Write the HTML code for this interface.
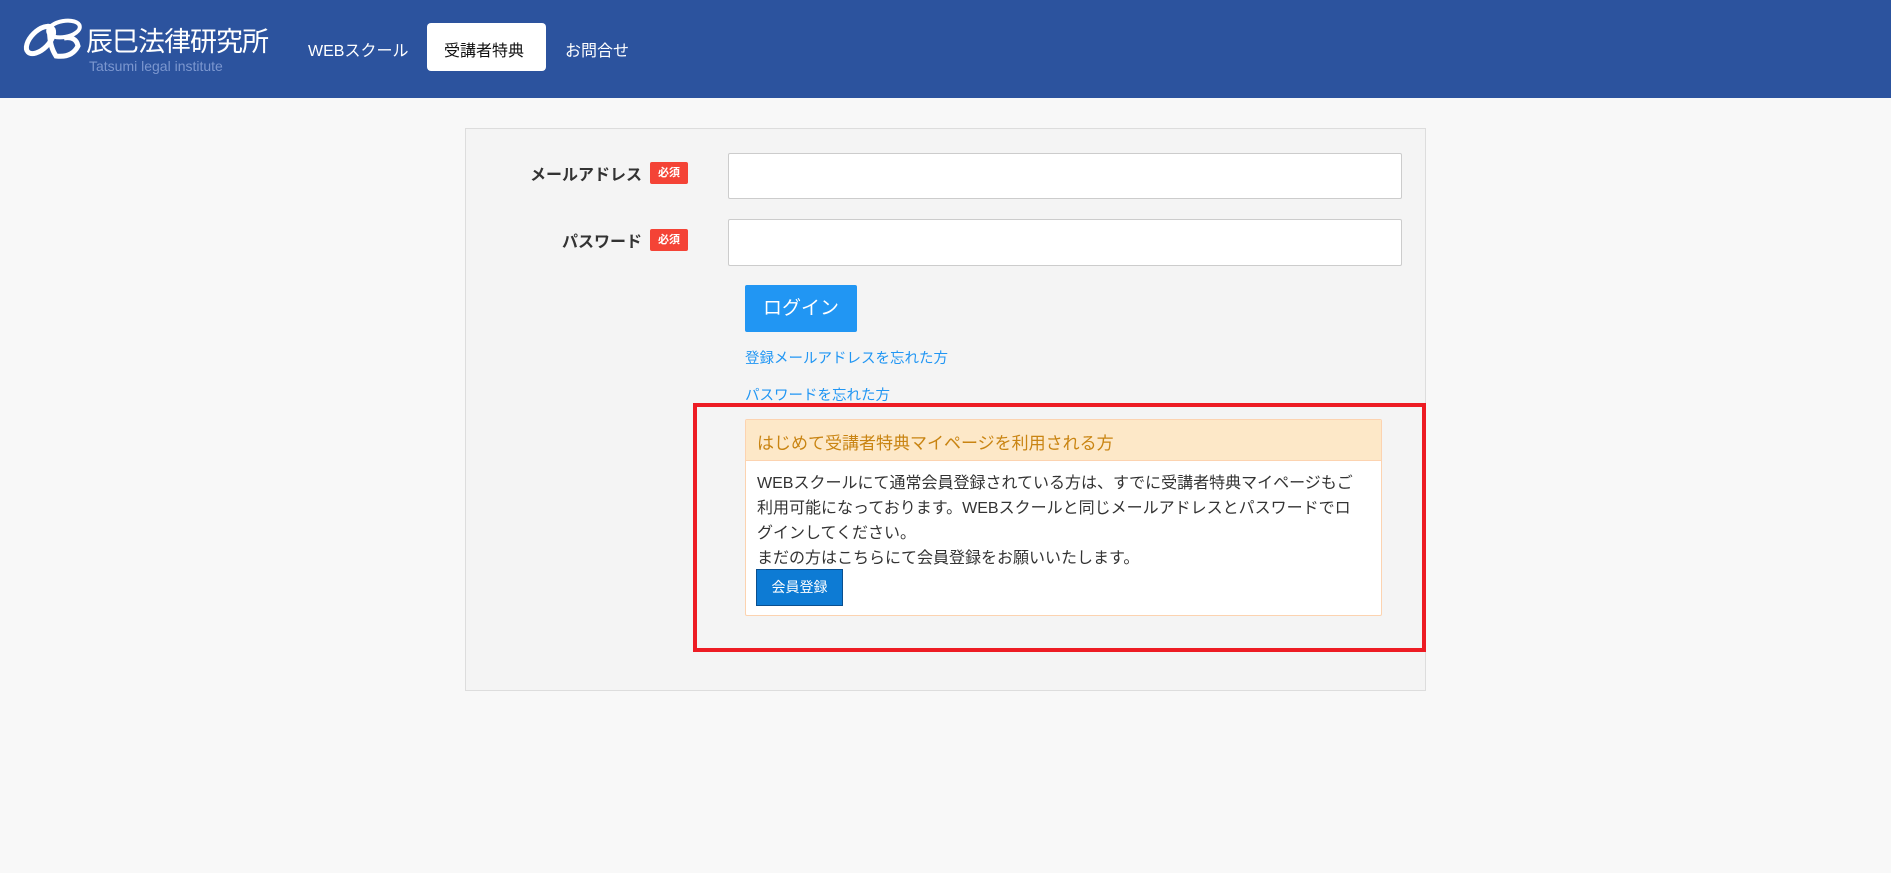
<!DOCTYPE html>
<html><head><meta charset="utf-8"><style>
*{margin:0;padding:0;box-sizing:border-box}
body{width:1891px;height:873px;background:#f8f8f8;font-family:"Liberation Sans","Noto Sans CJK JP",sans-serif;color:#333;position:relative;overflow:hidden}
.a{position:absolute;white-space:nowrap}
#hd{left:0;top:0;width:1891px;height:98px;background:#2c539e}
.nav{color:#fff;font-size:16px;top:37px}
.badge{background:#f44336;color:#fff;font-size:11px;font-weight:bold;width:38px;height:22px;line-height:22px;text-align:center;border-radius:2px}
.lbl{font-size:16px;font-weight:bold;color:#333}
.inp{background:#fff;border:1px solid #ccc;border-radius:2px}
.lnk{color:#2196f3;font-size:15px}
</style></head><body>
<div id="hd" class="a"></div>
<svg class="a" style="left:20px;top:14px" width="66" height="46" viewBox="0 0 66 46">
<ellipse cx="20" cy="26" rx="17" ry="9" transform="rotate(-45 20 26)" fill="none" stroke="#fff" stroke-width="5"/>
<ellipse cx="44" cy="15" rx="16" ry="8" transform="rotate(-10 44 15)" fill="none" stroke="#fff" stroke-width="4"/>
<path d="M30 10 Q28 30 36 42 Q52 44 58 32 Q56 22 44 24" fill="none" stroke="#fff" stroke-width="5"/>
</svg>
<div class="a" style="left:86px;top:20px;font-size:27px;color:#fff;letter-spacing:-1px">辰巳法律研究所</div>
<div class="a" style="left:89px;top:58px;font-size:14px;color:#7c97cf">Tatsumi legal institute</div>
<div class="a nav" style="left:308px">WEBスクール</div>
<div class="a" style="left:427px;top:23px;width:119px;height:48px;background:#fff;border-radius:4px"></div>
<div class="a nav" style="left:444px;color:#111">受講者特典</div>
<div class="a nav" style="left:565px">お問合せ</div>

<div class="a" style="left:465px;top:128px;width:961px;height:563px;background:#f4f4f4;border:1px solid #ddd"></div>
<div class="a lbl" style="left:530px;top:161px">メールアドレス</div>
<div class="a badge" style="left:650px;top:162px">必須</div>
<div class="a inp" style="left:728px;top:153px;width:674px;height:46px"></div>
<div class="a lbl" style="left:562px;top:228px">パスワード</div>
<div class="a badge" style="left:650px;top:229px">必須</div>
<div class="a inp" style="left:728px;top:219px;width:674px;height:47px"></div>
<div class="a" style="left:745px;top:285px;width:112px;height:47px;background:#2196f3;border-radius:2px;color:#fff;font-size:19px;line-height:47px;text-align:center">ログイン</div>
<div class="a lnk" style="left:745px;top:347px;font-size:14.5px">登録メールアドレスを忘れた方</div>
<div class="a lnk" style="left:745px;top:384px;font-size:14.5px">パスワードを忘れた方</div>

<div class="a" style="left:693px;top:403px;width:733px;height:249px;border:4px solid #ed1c24"></div>
<div class="a" style="left:745px;top:419px;width:637px;height:197px;background:#fff;border:1px solid #fcd3b0;border-radius:2px"></div>
<div class="a" style="left:746px;top:420px;width:635px;height:41px;background:#fde8c8;border-bottom:1px solid #fcd3b0"></div>
<div class="a" style="left:757px;top:429px;font-size:17px;color:#c98412">はじめて受講者特典マイページを利用される方</div>
<div class="a" style="left:757px;top:471px;font-size:16px;line-height:25px;color:#333">WEBスクールにて通常会員登録されている方は、すでに受講者特典マイページもご<br>利用可能になっております。WEBスクールと同じメールアドレスとパスワードでロ<br>グインしてください。<br>まだの方はこちらにて会員登録をお願いいたします。</div>
<div class="a" style="left:756px;top:569px;width:87px;height:37px;background:#0d7bd4;border:1px solid #0a4f8f;color:#fff;font-size:14px;line-height:35px;text-align:center">会員登録</div>
</body></html>
